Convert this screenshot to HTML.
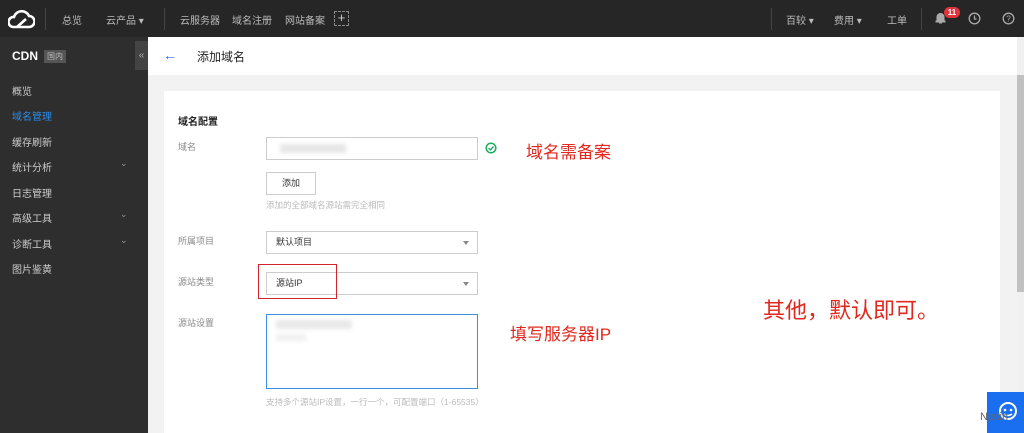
<!DOCTYPE html>
<html><head><meta charset="utf-8"><style>
*{margin:0;padding:0;box-sizing:border-box}
body{width:1024px;height:433px;overflow:hidden;background:#f2f2f2;font-family:"Liberation Sans","Noto Sans CJK SC",sans-serif;font-size:10px;color:#333;position:relative}
.a{position:absolute;white-space:nowrap}
.top{left:0;top:0;width:1024px;height:37px;background:#262626}
.tt{color:#bbb;font-size:10px;top:12px}
.side{left:0;top:37px;width:148px;height:396px;background:#2e2e2e}
.si{color:#ccc;font-size:10px;left:12px}
.inp{border:1px solid #ccc;background:#fff;height:23px}
.lbl{color:#888;font-size:9px;left:178px}
.red{color:#e0281e}
.caret{width:0;height:0;border-left:3px solid transparent;border-right:3px solid transparent;border-top:4px solid #888}
</style></head><body>
<div class="a top"></div>
<svg class="a" style="left:8px;top:8px" width="27" height="22" viewBox="0 0 27 22"><path d="M5 19 A5 5 0 0 1 6 9 A8 8 0 0 1 21 8 A5.5 5.5 0 0 1 21 19 Z M9 19 L18 11" fill="none" stroke="#fff" stroke-width="2.6"/></svg>
<div class="a" style="left:45px;top:8px;width:1px;height:22px;background:#444"></div>
<div class="a tt" style="left:62px">总览</div>
<div class="a tt" style="left:106px">云产品 ▾</div>
<div class="a" style="left:164px;top:8px;width:1px;height:22px;background:#444"></div>
<div class="a tt" style="left:180px">云服务器</div>
<div class="a tt" style="left:232px">域名注册</div>
<div class="a tt" style="left:285px">网站备案</div>
<div class="a" style="left:334px;top:11px;width:15px;height:15px;border:1px dashed #888;color:#ccc;font-size:13px;line-height:12px;text-align:center">+</div>
<div class="a" style="left:771px;top:8px;width:1px;height:22px;background:#444"></div>
<div class="a tt" style="left:786px">百较 ▾</div>
<div class="a tt" style="left:834px">费用 ▾</div>
<div class="a tt" style="left:887px">工单</div>
<div class="a" style="left:921px;top:8px;width:1px;height:22px;background:#444"></div>
<svg class="a" style="left:935px;top:12px" width="11" height="12" viewBox="0 0 11 12"><path d="M2 9 V5 A3.5 3.5 0 0 1 9 5 V9 H10 V10 H1 V9Z M4 11 H7" fill="#aaa" stroke="#aaa"/></svg>
<div class="a" style="left:944px;top:7px;width:16px;height:11px;border-radius:6px;background:#e2343c;color:#fff;font-size:8px;font-weight:bold;text-align:center;line-height:11px">11</div>
<svg class="a" style="left:968px;top:12px" width="13" height="13"><circle cx="6.5" cy="6.5" r="5.3" fill="none" stroke="#aaa" stroke-width="1.3"/><path d="M6.5 3.5V7H8.5" fill="none" stroke="#aaa" stroke-width="1.2"/></svg>
<svg class="a" style="left:1002px;top:12px" width="13" height="13"><circle cx="6.5" cy="6.5" r="5.3" fill="none" stroke="#aaa" stroke-width="1.3"/><text x="6.5" y="9.5" font-size="8" fill="#aaa" text-anchor="middle" font-family="Liberation Sans">?</text></svg>

<div class="a side"></div>
<div class="a" style="left:12px;top:49px;color:#fff;font-weight:bold;font-size:12px">CDN</div>
<div class="a" style="left:44px;top:50px;background:#555;color:#bbb;font-size:8px;padding:1px 3px">国内</div>
<div class="a" style="left:135px;top:41px;width:13px;height:29px;background:#444;color:#aaa;font-size:10px;text-align:center;line-height:29px">«</div>
<div class="a si" style="top:83px">概览</div>
<div class="a si" style="top:108px;color:#2e8ae6">域名管理</div>
<div class="a si" style="top:134px">缓存刷新</div>
<div class="a si" style="top:159px">统计分析</div><div class="a" style="left:120px;top:158px;color:#999;font-size:9px">⌄</div>
<div class="a si" style="top:185px">日志管理</div>
<div class="a si" style="top:210px">高级工具</div><div class="a" style="left:120px;top:209px;color:#999;font-size:9px">⌄</div>
<div class="a si" style="top:236px">诊断工具</div><div class="a" style="left:120px;top:235px;color:#999;font-size:9px">⌄</div>
<div class="a si" style="top:261px">图片鉴黄</div>

<div class="a" style="left:148px;top:37px;width:869px;height:38px;background:#fff"></div>
<div class="a" style="left:163px;top:47px;color:#2e6be6;font-size:14px">←</div>
<div class="a" style="left:197px;top:48px;font-size:12px;color:#222">添加域名</div>
<div class="a" style="left:1017px;top:37px;width:7px;height:396px;background:#f0f0f0"></div>
<div class="a" style="left:1017px;top:75px;width:7px;height:217px;background:#c1c1c1"></div>

<div class="a" style="left:164px;top:91px;width:836px;height:342px;background:#fff"></div>
<div class="a" style="left:178px;top:113px;font-size:10px;font-weight:bold;color:#222">域名配置</div>
<div class="a lbl" style="top:140px">域名</div>
<div class="a inp" style="left:266px;top:137px;width:212px"></div>
<div class="a" style="left:280px;top:144px;width:66px;height:9px;background:#e6e6e6;filter:blur(2px)"></div>
<svg class="a" style="left:485px;top:142px" width="12" height="12"><circle cx="6" cy="6" r="4.8" fill="none" stroke="#1aad5c" stroke-width="1.5"/><path d="M3.6 6.2L5.4 7.9 8.5 4.5" fill="none" stroke="#1aad5c" stroke-width="1.4"/></svg>
<div class="a red" style="left:526px;top:138px;font-size:17px">域名需备案</div>
<div class="a inp" style="left:266px;top:172px;width:50px;font-size:9px;text-align:center;line-height:21px;color:#333">添加</div>
<div class="a" style="left:266px;top:199px;font-size:8.5px;color:#bbb">添加的全部域名源站需完全相同</div>
<div class="a lbl" style="top:234px">所属项目</div>
<div class="a inp" style="left:266px;top:231px;width:212px;font-size:9px;line-height:21px;padding-left:9px">默认项目</div>
<div class="a caret" style="left:463px;top:241px"></div>
<div class="a lbl" style="top:275px">源站类型</div>
<div class="a inp" style="left:266px;top:272px;width:212px;font-size:9px;line-height:21px;padding-left:9px">源站IP</div>
<div class="a caret" style="left:463px;top:282px"></div>
<div class="a" style="left:258px;top:264px;width:79px;height:35px;border:1.5px solid #d0262b"></div>
<div class="a lbl" style="top:316px">源站设置</div>
<div class="a" style="left:266px;top:314px;width:212px;height:75px;border:1px solid #3a8ee6;background:#fff"></div>
<div class="a" style="left:276px;top:320px;width:76px;height:9px;background:#e8e8e8;filter:blur(2px)"></div>
<div class="a" style="left:276px;top:334px;width:30px;height:7px;background:#f0f0f0;filter:blur(2px)"></div>
<div class="a red" style="left:510px;top:320px;font-size:17px">填写服务器IP</div>
<div class="a red" style="left:763px;top:293px;font-size:22px">其他，默认即可。</div>
<div class="a" style="left:266px;top:396px;font-size:8.5px;color:#bbb">支持多个源站IP设置，一行一个，可配置端口（1-65535）</div>
<div class="a" style="left:987px;top:392px;width:37px;height:41px;background:#1a6ef0"></div>
<svg class="a" style="left:996px;top:400px" width="24" height="24"><circle cx="12" cy="11" r="8" fill="none" stroke="#fff" stroke-width="2"/><circle cx="9" cy="10" r="1.3" fill="#fff"/><circle cx="15" cy="10" r="1.3" fill="#fff"/><path d="M8 14Q12 17 16 14" fill="none" stroke="#fff" stroke-width="1.5"/></svg>
<div class="a" style="left:980px;top:411px;font-size:11px;color:#666">Npcin</div>
</body></html>
